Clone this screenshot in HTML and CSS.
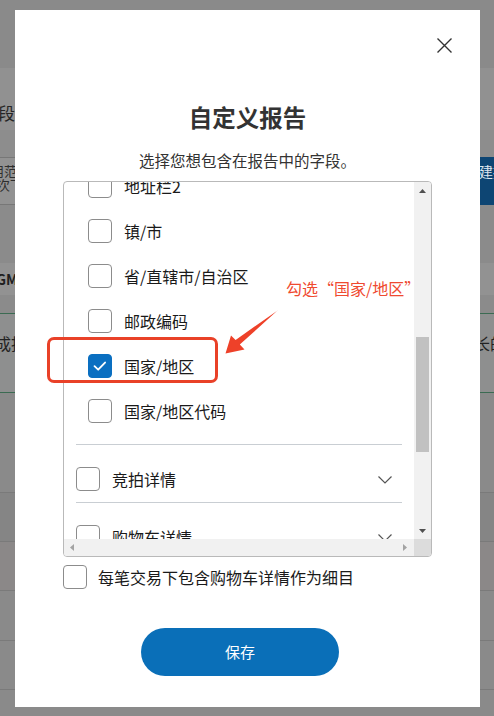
FILE: index.html
```html
<!DOCTYPE html>
<html lang="zh-CN">
<head>
<meta charset="utf-8">
<title>自定义报告</title>
<link rel="stylesheet" href="styles.css">
</head>
<body>
<div class="page">
  <div class="bg-row r-top"></div>
  <div class="bg-row r-head">
    <div class="edge-l"><span class="frag-head">段</span></div><div class="fill"></div><div class="edge-r"></div>
  </div>
  <div class="bg-row r-gap1"></div>
  <div class="bg-row r-search">
    <div class="edge-l"><span class="frag-a">用范</span><span class="frag-b">次下</span></div><div class="fill"></div><div class="edge-r blue"><span class="frag-btn">建报</span></div>
  </div>
  <div class="bg-row r-gap2"></div>
  <div class="bg-row r-th">
    <div class="edge-l"><span class="frag-th">GMT</span></div><div class="fill"></div><div class="edge-r"></div>
  </div>
  <div class="bg-row r-gap3"></div>
  <div class="bg-row r-tr">
    <div class="edge-l"><span class="frag-td">成拒</span></div><div class="fill"></div><div class="edge-r"><span class="frag-td-r">长的</span></div>
  </div>
  <div class="bg-row r-line h100"></div>
  <div class="bg-row r-line h49 shade-a"></div>
  <div class="bg-row r-line h49 shade-b"></div>
  <div class="bg-row r-line h50"></div>
  <div class="bg-row r-line h49"></div>
</div>

<div class="modal">
  <svg class="close" viewBox="0 0 15 15" width="15" height="15"><path d="M0.5 0.5 L14.5 14.5 M14.5 0.5 L0.5 14.5" stroke="#333" stroke-width="1.4" fill="none"/></svg>
  <h1 class="title">自定义报告</h1>
  <p class="subtitle">选择您想包含在报告中的字段。</p>

  <div class="listbox">
    <div class="viewport">
      <div class="scroll-content">
        <div class="section">
          <div class="sublist">
            <div class="item"><span class="cb"></span><span>地址栏2</span></div>
            <div class="item"><span class="cb"></span><span>镇/市</span></div>
            <div class="item"><span class="cb"></span><span>省/直辖市/自治区</span></div>
            <div class="item"><span class="cb"></span><span>邮政编码</span></div>
            <div class="item"><span class="cb checked"><svg viewBox="0 0 24 24" width="22" height="22"><path d="M6 12.2 L10 16 L17.5 8.2" stroke="#fff" stroke-width="2" fill="none" stroke-linecap="round" stroke-linejoin="round"/></svg></span><span>国家/地区</span></div>
            <div class="item"><span class="cb"></span><span>国家/地区代码</span></div>
          </div>
        </div>
        <div class="section">
          <div class="sec-head"><span class="cb"></span><span class="label">竞拍详情</span><svg class="chev" viewBox="0 0 14 8" width="14" height="8"><path d="M0.5 0.5 L7 7 L13.5 0.5" stroke="#555" stroke-width="1.2" fill="none"/></svg></div>
        </div>
        <div class="section">
          <div class="sec-head"><span class="cb"></span><span class="label">购物车详情</span><svg class="chev" viewBox="0 0 14 8" width="14" height="8"><path d="M0.5 0.5 L7 7 L13.5 0.5" stroke="#555" stroke-width="1.2" fill="none"/></svg></div>
        </div>
      </div>
    </div>
    <div class="vbar">
      <div class="sb-btn"><svg viewBox="0 0 7 4" width="7" height="4"><path d="M0 4 L3.5 0 L7 4 Z" fill="#505050"/></svg></div>
      <div class="thumb"></div>
      <div class="sb-space"></div>
      <div class="sb-btn"><svg viewBox="0 0 7 4" width="7" height="4"><path d="M0 0 L3.5 4 L7 0 Z" fill="#505050"/></svg></div>
    </div>
    <div class="hbar">
      <svg viewBox="0 0 4 7" width="4" height="7"><path d="M4 0 L0 3.5 L4 7 Z" fill="#a3a3a3"/></svg>
      <svg viewBox="0 0 4 7" width="4" height="7"><path d="M0 0 L4 3.5 L0 7 Z" fill="#a3a3a3"/></svg>
    </div>
    <div class="corner"></div>
  </div>

  <label class="opt"><span class="cb"></span><span>每笔交易下包含购物车详情作为细目</span></label>

  <div class="footer"><button class="save">保存</button></div>
</div>

<div class="annot-box"></div>
<div class="annot-text">勾选“国家/地区”</div>
<svg class="annot-arrow" viewBox="0 0 494 716" width="494" height="716"><path d="M278.6 309.6 L239.8 344.6 L244.5 349.5 L225.5 353.5 L231 335.5 L235.6 340 L277.6 310.4 Z" fill="#ee4129"/></svg>
</body>
</html>
```
FILE: styles.css
```css
* { box-sizing: border-box; }
html, body { margin: 0; padding: 0; }
body {
  width: 494px;
  height: 716px;
  overflow: hidden;
  position: relative;
  background: #8a8a8a;
  font-family: "Noto Sans CJK SC", "Noto Sans", sans-serif;
}

/* dimmed background page */
.page { display: flex; flex-direction: column; }
.bg-row { display: flex; flex: none; }
.edge-l { width: 15px; overflow: hidden; white-space: nowrap; flex: none; }
.fill { flex: 1; }
.edge-r { width: 14px; overflow: hidden; white-space: nowrap; flex: none; }

.r-top { height: 68px; background: #8a8a8a; }
.r-head { height: 62px; background: #919191; }
.r-head .edge-l { padding-top: 35px; font-size: 17px; line-height: 20px; color: #262626; }
.frag-head { display: block; margin-left: -2px; }
.r-gap1 { height: 27px; background: #8d8d8d; }
.r-search { height: 48px; background: #8d8d8d; }
.r-search .edge-l {
  background: #929292;
  border-top: 1px solid #777;
  border-bottom: 1px solid #777;
  padding-top: 6px;
  font-size: 13px;
  line-height: 14px;
  color: #2e2e2e;
}
.frag-a { display: block; margin-left: -9px; }
.frag-b { display: block; margin-left: -3px; }
.edge-r.blue { background: #0d4573; color: #dfe6ee; font-size: 14px; line-height: 20px; padding-top: 4px; }
.frag-btn { display: block; margin-left: -1px; }
.r-gap2 { height: 58px; background: #8b8b8b; }
.r-th { height: 32px; background: #929292; }
.r-th .edge-l { font-size: 14px; line-height: 32px; font-weight: 700; color: #1e1e1e; }
.frag-th { display: block; margin-left: -4px; }
.r-gap3 { height: 18px; background: #8b8b8b; }
.r-tr {
  height: 80px;
  background: #8e8f8f;
  border-top: 1px solid #3b6b52;
  border-bottom: 1px solid #3b6b52;
  font-size: 16px;
  line-height: 20px;
  color: #222;
}
.r-tr .edge-l, .r-tr .edge-r { padding-top: 19px; }
.frag-td { display: block; margin-left: -5px; }
.frag-td-r { display: block; margin-left: -6px; }
.r-line { border-bottom: 1px solid #7a7a7a; background: #8a8a8a; }
.h100 { height: 100px; }
.h49 { height: 49px; }
.h50 { height: 50px; }
.shade-a { background: #858585; }
.shade-b { background: #8b8888; }

/* modal */
.modal {
  position: absolute;
  left: 15px;
  top: 10px;
  width: 465px;
  height: 697px;
  background: #fff;
  padding: 91px 48px 0;
  display: flex;
  flex-direction: column;
}
.close { position: absolute; top: 28px; right: 28px; display: block; }
.title {
  margin: 0;
  font-size: 23.5px;
  line-height: 32px;
  font-weight: 700;
  text-align: center;
  color: #333;
}
.subtitle {
  margin: 16px 0 0;
  font-size: 15.5px;
  line-height: 23px;
  text-align: center;
  color: #333;
}

.listbox {
  margin-top: 9px;
  height: 376px;
  flex: none;
  border: 1px solid #b9b9b9;
  border-radius: 4px;
  overflow: hidden;
  display: grid;
  grid-template-columns: 1fr 17px;
  grid-template-rows: 1fr 17px;
}
.viewport { overflow: hidden; min-height: 0; }
.scroll-content { margin-top: -19px; }
.section { margin: 0 12px; border-bottom: 1px solid #c9ced3; }
.sublist { padding: 0 0 11px 12px; }
.item {
  display: flex;
  align-items: flex-start;
  gap: 12px;
  height: 45px;
  padding-top: 11px;
  font-size: 16px;
  line-height: 24px;
  color: #1a1a1a;
  white-space: nowrap;
}
.sec-head {
  display: flex;
  align-items: flex-start;
  gap: 12px;
  padding: 22px 10px 11px 0;
  font-size: 16px;
  line-height: 24px;
  color: #1a1a1a;
}
.sec-head .label { flex: 1; }
.chev { flex: none; margin-top: 9px; display: block; }

.cb {
  width: 24px;
  height: 24px;
  flex: none;
  border: 1px solid #8c8c8c;
  border-radius: 4px;
  background: #fff;
  display: flex;
  align-items: center;
  justify-content: center;
}
.cb.checked { background: #0a6fc1; border-color: #0a6fc1; }
.cb svg { display: block; }

.vbar { background: #f1f1f1; display: flex; flex-direction: column; min-height: 0; }
.sb-btn { height: 17px; flex: none; display: flex; align-items: center; justify-content: center; }
.sb-btn svg { display: block; }
.thumb { margin: 138px 2px 0; height: 115px; flex: none; background: #c1c1c1; }
.sb-space { flex: 1; }
.hbar {
  background: #f1f1f1;
  display: flex;
  align-items: center;
  justify-content: space-between;
  padding: 0 7px 0 6px;
}
.hbar svg { display: block; }
.corner { background: #dcdcdc; }

.opt {
  display: flex;
  align-items: center;
  gap: 11px;
  margin-top: 8px;
  font-size: 16px;
  line-height: 24px;
  color: #1a1a1a;
}

.footer { margin-top: 39px; display: flex; justify-content: center; padding-right: 15px; }
.save {
  width: 198px;
  height: 48px;
  border: none;
  border-radius: 24px;
  background: #0a6fb8;
  color: #fff;
  font-family: inherit;
  font-size: 15px;
  line-height: 20px;
  padding: 0;
}

/* annotation overlay */
.annot-box {
  position: absolute;
  left: 47px;
  top: 337px;
  width: 171px;
  height: 46px;
  border: 3px solid #e94128;
  border-radius: 7px;
}
.annot-text {
  position: absolute;
  left: 286px;
  top: 279px;
  font-size: 16px;
  line-height: 18px;
  color: #ef4a30;
  white-space: nowrap;
}
.annot-arrow { position: absolute; left: 0; top: 0; pointer-events: none; }
```
